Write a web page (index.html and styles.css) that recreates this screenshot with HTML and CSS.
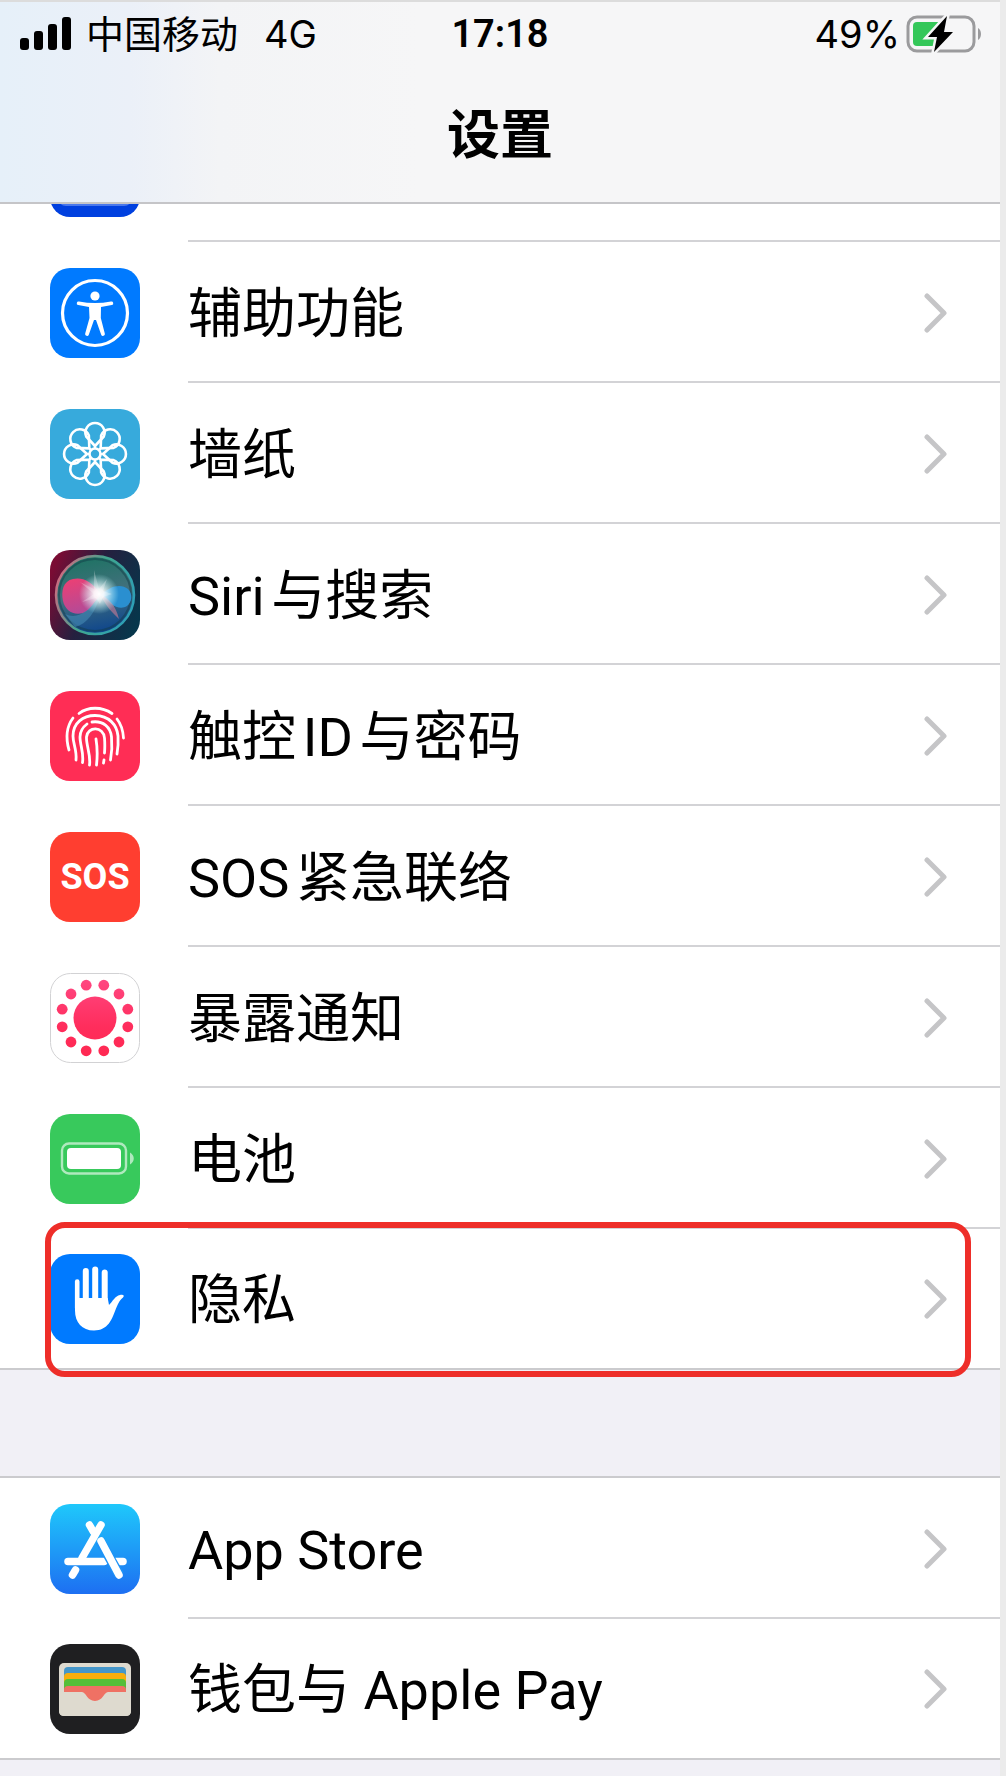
FILE: index.html
```html
<!DOCTYPE html>
<html lang="zh-CN">
  <head>
    <meta charset="UTF-8" />
    <meta name="viewport" content="width=device-width, initial-scale=1.0" />
    <title>设置</title>
    <link rel="stylesheet" href="styles.css">
  </head>
  <body>
    <div class="phone">
      <header class="top-bar">
        <!-- Status bar -->
        <div class="status">
          <div class="status-left">
            <svg class="signal" viewBox="0 0 52 34">
              <rect x="0" y="21" width="9" height="12" rx="3" />
              <rect x="14" y="14" width="9" height="19" rx="3" />
              <rect x="28" y="7" width="9" height="26" rx="3" />
              <rect x="42" y="0" width="9" height="33" rx="3" />
            </svg>
            <span class="carrier">中国移动</span>
            <span>4G</span>
          </div>
          <div class="time">17:18</div>
          <div class="status-right">
            <span>49%</span>
            <svg class="battery" viewBox="0 0 76 38">
              <rect x="2" y="2" width="66" height="34" rx="9" fill="none" stroke="#9b9b9d" stroke-width="3" />
              <path d="M72 13c4 2 4 10 0 12z" fill="#9b9b9d" />
              <path d="M11 7h22v24H11q-4 0-4-4V11q0-4 4-4z" fill="#34c759" />
              <path d="M41 1L22 22h9l-3 15L47 17h-9l3-16z" fill="#000" stroke="#f6f6f7" stroke-width="5" paint-order="stroke" />
            </svg>
          </div>
        </div>
        <h1>设置</h1>
      </header>

      <main>
        <nav class="group group-first">
          <a class="row" href="#display" aria-label="显示与亮度">
            <svg class="icon" viewBox="0 0 90 90">
              <rect width="90" height="90" rx="20" fill="#0040df" />
              <rect x="8" y="10" width="74" height="69" rx="8" fill="#4a78ec" />
            </svg>
            <span class="label"></span>
          </a>
          <a class="row" href="#accessibility">
            <svg class="icon" viewBox="0 0 90 90">
              <rect width="90" height="90" rx="20" fill="#007aff" />
              <circle cx="45" cy="45" r="32.5" fill="none" stroke="#fff" stroke-width="3.2" />
              <circle cx="45" cy="28" r="4.6" fill="#fff" />
              <path d="M29 33.5q16 3 32 0a1.8 1.8 0 0 1 .8 3.6L51 39l-.2 11 4 15.5a1.9 1.9 0 0 1-3.6 1.2L46 52h-2l-5.2 14.7a1.9 1.9 0 0 1-3.6-1.2L39.5 50 39 39l-10.8-1.9a1.8 1.8 0 0 1 .8-3.6z" fill="#fff" />
            </svg>
            <span class="label">辅助功能</span>
            <svg class="chevron" viewBox="0 0 24 40"><path d="M3 3l17 17L3 37" /></svg>
          </a>
          <a class="row" href="#wallpaper">
            <svg class="icon" viewBox="0 0 90 90">
              <defs>
                <path id="petal" d="M0-5V-8L-8.8-17.5A9.6 9.6 0 1 1 8.8-17.5L0-8" />
              </defs>
              <rect width="90" height="90" rx="20" fill="#37aadc" />
              <g transform="translate(45 45)" fill="none" stroke="#fff" stroke-width="2.6" stroke-linejoin="round">
                <use href="#petal" />
                <use href="#petal" transform="rotate(45)" />
                <use href="#petal" transform="rotate(90)" />
                <use href="#petal" transform="rotate(135)" />
                <use href="#petal" transform="rotate(180)" />
                <use href="#petal" transform="rotate(225)" />
                <use href="#petal" transform="rotate(270)" />
                <use href="#petal" transform="rotate(315)" />
                <circle r="5.5" />
              </g>
            </svg>
            <span class="label">墙纸</span>
            <svg class="chevron" viewBox="0 0 24 40"><path d="M3 3l17 17L3 37" /></svg>
          </a>
          <a class="row" href="#siri">
            <svg class="icon" viewBox="0 0 90 90">
              <defs>
                <linearGradient id="siri-bg" x1="0" y1="0.3" x2="1" y2="0.7">
                  <stop offset="0" stop-color="#7a0c34" />
                  <stop offset="0.45" stop-color="#25203f" />
                  <stop offset="1" stop-color="#07364b" />
                </linearGradient>
                <linearGradient id="siri-ball" x1="0.3" y1="0" x2="0.5" y2="1">
                  <stop offset="0" stop-color="#1c7362" />
                  <stop offset="0.5" stop-color="#41707c" />
                  <stop offset="1" stop-color="#0e458d" />
                </linearGradient>
                <linearGradient id="siri-ring" x1="0" y1="0.2" x2="1" y2="0.6">
                  <stop offset="0" stop-color="#d9667f" />
                  <stop offset="0.5" stop-color="#40a68f" />
                  <stop offset="1" stop-color="#2d9fb5" />
                </linearGradient>
                <linearGradient id="siri-pink" x1="0" y1="0" x2="0.3" y2="1">
                  <stop offset="0" stop-color="#ef3f72" />
                  <stop offset="1" stop-color="#b54a96" />
                </linearGradient>
                <radialGradient id="siri-glow">
                  <stop offset="0" stop-color="#fff" />
                  <stop offset="0.25" stop-color="#fff" stop-opacity="0.9" />
                  <stop offset="1" stop-color="#bff" stop-opacity="0" />
                </radialGradient>
              </defs>
              <rect width="90" height="90" rx="20" fill="url(#siri-bg)" />
              <circle cx="45" cy="45" r="39" fill="url(#siri-ball)" stroke="url(#siri-ring)" stroke-width="2.5" />
              <circle cx="45" cy="45" r="36" fill="none" stroke="#123b48" stroke-width="2" opacity="0.5" />
              <path d="M51 45C42 30 31 27 23 29 13 31 11 41 13 51c2 9 10 15 20 12 8-3 11-12 18-18z" fill="url(#siri-pink)" />
              <path d="M51 45c8-9 20-12 27-6 5 5 4 13-1 17-8 5-18-2-26-11z" fill="#2a8fd0" />
              <path d="M51 45c8 4 14 9 18 24-7-7-13-12-18-24z" fill="#b47693" opacity="0.7" />
              <path d="M15 64C27 70 39 62 50 45 46 62 37 74 25 77" fill="#4b93bd" opacity="0.5" />
              <circle cx="49" cy="44" r="20" fill="url(#siri-glow)" />
              <path d="M44 20l5 19 8-10-4 12 9 3-9 3-3 7-4-6-14 4 12-8-14-12 14 7z" fill="#fff" opacity="0.25" />
            </svg>
            <span class="label">Siri与搜索</span>
            <svg class="chevron" viewBox="0 0 24 40"><path d="M3 3l17 17L3 37" /></svg>
          </a>
          <a class="row" href="#touch-id">
            <svg class="icon" viewBox="0 0 90 90">
              <rect width="90" height="90" rx="20" fill="#ff2d55" />
              <g fill="none" stroke="#fff" stroke-width="2.8" stroke-linecap="round">
                <path d="M29 22.5c9-7 23-7 33 0" />
                <path d="M23 27c-6 8-8 18-4 32" />
                <path d="M67 28c4 5 6 11 6.5 19" />
                <path d="M26 69c1-10-3-16-3-24 0-13 10-20.5 22-20.5 14 0 22 9.5 23 20.5.5 7 0 12-1 18" />
                <path d="M32.5 71.5C34 62 30 54 30 46c0-6 3-10 7-13" />
                <path d="M42 31c11-1.5 18.5 5 19.5 15 .7 8 .5 15-1 23" />
                <path d="M39.5 74C41 64 36 54 36.5 46c1-11 17-11 18 1 .4 5 .4 10 0 15" />
                <path d="M46.5 74c1-9 1-17-.5-26" />
                <path d="M54 69l-.5 3" />
              </g>
            </svg>
            <span class="label">触控ID与密码</span>
            <svg class="chevron" viewBox="0 0 24 40"><path d="M3 3l17 17L3 37" /></svg>
          </a>
          <a class="row" href="#sos">
            <span class="icon icon-sos" aria-hidden="true">SOS</span>
            <span class="label">SOS紧急联络</span>
            <svg class="chevron" viewBox="0 0 24 40"><path d="M3 3l17 17L3 37" /></svg>
          </a>
          <a class="row" href="#exposure">
            <svg class="icon" viewBox="0 0 90 90">
              <defs>
                <linearGradient id="exposure-fill" gradientUnits="userSpaceOnUse" x1="0" y1="0" x2="0" y2="90">
                  <stop offset="0" stop-color="#ff4a86" />
                  <stop offset="0.6" stop-color="#ff2d5c" />
                  <stop offset="1" stop-color="#ff2850" />
                </linearGradient>
              </defs>
              <rect x="0.5" y="0.5" width="89" height="89" rx="20" fill="#fff" stroke="#d2d2d4" />
              <g fill="url(#exposure-fill)">
                <circle cx="45" cy="45" r="21.5" />
                <circle cx="53.8" cy="12.2" r="5.4" />
                <circle cx="69" cy="21" r="5.4" />
                <circle cx="77.8" cy="36.2" r="5.4" />
                <circle cx="77.8" cy="53.8" r="5.4" />
                <circle cx="69" cy="69" r="5.4" />
                <circle cx="53.8" cy="77.8" r="5.4" />
                <circle cx="36.2" cy="77.8" r="5.4" />
                <circle cx="21" cy="69" r="5.4" />
                <circle cx="12.2" cy="53.8" r="5.4" />
                <circle cx="12.2" cy="36.2" r="5.4" />
                <circle cx="21" cy="21" r="5.4" />
                <circle cx="36.2" cy="12.2" r="5.4" />
              </g>
            </svg>
            <span class="label">暴露通知</span>
            <svg class="chevron" viewBox="0 0 24 40"><path d="M3 3l17 17L3 37" /></svg>
          </a>
          <a class="row" href="#battery">
            <svg class="icon" viewBox="0 0 90 90">
              <rect width="90" height="90" rx="20" fill="#38c95c" />
              <rect x="12" y="29.5" width="64" height="30" rx="7" fill="none" stroke="#fff" stroke-width="2.4" opacity="0.6" />
              <rect x="17" y="34" width="54" height="21" rx="4" fill="#fff" />
              <path d="M80 38.5c5 3 5 9 0 12z" fill="#fff" opacity="0.6" />
            </svg>
            <span class="label">电池</span>
            <svg class="chevron" viewBox="0 0 24 40"><path d="M3 3l17 17L3 37" /></svg>
          </a>
          <a class="row marked" href="#privacy">
            <svg class="icon" viewBox="0 0 90 90">
              <rect width="90" height="90" rx="20" fill="#007aff" />
              <g stroke="#fff" stroke-linecap="round">
                <path d="M27.2 27.5V54" stroke-width="4.6" />
                <path d="M35.8 17V54" stroke-width="6" />
                <path d="M45.2 15.5V54" stroke-width="6" />
                <path d="M54.7 18.5V54" stroke-width="6" />
              </g>
              <path d="M25 44h32.7l1.3 7c4-4 6-9 11-10 3-.5 5 .5 3 2.5-4 3-5 7-7 11-4 11-8 22-22 22-12 0-19-8-19-20z" fill="#fff" />
            </svg>
            <span class="label">隐私</span>
            <svg class="chevron" viewBox="0 0 24 40"><path d="M3 3l17 17L3 37" /></svg>
          </a>
        </nav>

        <nav class="group">
          <a class="row" href="#app-store">
            <svg class="icon" viewBox="0 0 90 90">
              <defs>
                <linearGradient id="store-bg" x1="0" y1="0" x2="0" y2="1">
                  <stop offset="0" stop-color="#1fc8fb" />
                  <stop offset="1" stop-color="#1d6ff2" />
                </linearGradient>
              </defs>
              <rect width="90" height="90" rx="20" fill="url(#store-bg)" />
              <g fill="none" stroke="#fff" stroke-width="7.5" stroke-linecap="round">
                <path d="M18 57.5h36" />
                <path d="M66 57.5h7" />
                <path d="M51 21L32 54" />
                <path d="M39.5 21l4 7" />
                <path d="M25.5 66l-3 5" />
              </g>
              <path d="M50 37L69.5 71" stroke="#1e93f7" stroke-width="10" />
              <path d="M51 37l18 34" stroke="#fff" stroke-width="7.5" stroke-linecap="round" />
            </svg>
            <span class="label">App Store</span>
            <svg class="chevron" viewBox="0 0 24 40"><path d="M3 3l17 17L3 37" /></svg>
          </a>
          <a class="row" href="#wallet">
            <svg class="icon" viewBox="0 0 90 90">
              <rect width="90" height="90" rx="20" fill="#1f1f21" />
              <rect x="9" y="19" width="72" height="53" rx="5" fill="#dedacf" />
              <path d="M14 49V27q0-4 4-4h54q4 0 4 4v22z" fill="#4596c9" />
              <path d="M14 49V33q0-4 4-4h54q4 0 4 4v16z" fill="#f8ae0b" />
              <path d="M14 49V39q0-4 4-4h54q4 0 4 4v10z" fill="#55bf38" />
              <path d="M14 49v-3q0-4 4-4h54q4 0 4 4v3z" fill="#ef7164" />
              <path d="M9 48h72v19q0 5-5 5H14q-5 0-5-5z" fill="#dedacf" />
              <path d="M32 48c4 0 5 9 13 9s9-9 13-9z" fill="#ef7164" />
            </svg>
            <span class="label">钱包与 Apple Pay</span>
            <svg class="chevron" viewBox="0 0 24 40"><path d="M3 3l17 17L3 37" /></svg>
          </a>
        </nav>
      </main>
    </div>
  </body>
</html>
```
FILE: styles.css
```css
* {
  box-sizing: border-box;
}
body {
  margin: 0;
  background-color: #ebebeb;
  font-family: Inter, "Noto Sans CJK SC", sans-serif;
  color: #000;
}
.phone {
  min-height: 100vh;
  margin-right: 6px;
  background-color: #f1f0f6;
  border-top: 2px solid #dcdcdc;
  overflow: hidden;
}

/* Header */
.top-bar {
  position: relative;
  z-index: 1;
  height: 202px;
  padding: 4px 18px 0;
  background: linear-gradient(to right, #e6f0f9 0, #ebf0f8 130px, #f3f4f6 220px, #f6f6f7 420px);
  border-bottom: 2px solid #c5c5c8;
}
.status {
  display: grid;
  grid-template-columns: 1fr auto 1fr;
  align-items: center;
  height: 56px;
  font-size: 38px;
  line-height: 56px;
}
.status-left,
.status-right {
  display: flex;
  align-items: center;
}
.status-right {
  justify-content: flex-end;
  gap: 6px;
}
.signal {
  width: 52px;
  height: 34px;
  margin-left: 2px;
  margin-right: 14px;
}
.carrier {
  margin-right: 26px;
}
.time {
  font-family: Roboto, sans-serif;
  font-weight: 600;
}
.battery {
  width: 76px;
  height: 38px;
}
h1 {
  margin: 33px 0 0;
  font-size: 53px;
  line-height: 80px;
  font-weight: 600;
  text-align: center;
}

/* Settings list */
.group {
  background-color: #fff;
  border-top: 2px solid #cbcbce;
}
/* scrolled part way under the header */
.group-first {
  margin-top: -105px;
  margin-bottom: 106px;
}
.row {
  position: relative;
  display: flex;
  align-items: center;
  height: 141px;
  padding-left: 50px;
  color: inherit;
  text-decoration: none;
}
.row:last-child {
  border-bottom: 2px solid #cbcbce;
}
.icon {
  flex: none;
  width: 90px;
  height: 90px;
  margin-right: 48px;
}
.icon-sos {
  border-radius: 20px;
  background-color: #ff3e30;
  color: #fff;
  font-family: Roboto, sans-serif;
  font-size: 36px;
  font-weight: 700;
  line-height: 90px;
  text-align: center;
}
.label {
  flex: 1;
  height: 141px;
  border-bottom: 2px solid #d3d3d6;
  font-family: Roboto, "Noto Sans CJK SC", sans-serif;
  font-size: 54px;
  line-height: 145px;
  white-space: nowrap;
  text-autospace: normal;
}
.row:last-child .label {
  border-bottom: none;
}
.chevron {
  position: absolute;
  right: 52px;
  width: 24px;
  height: 40px;
  fill: none;
  stroke: #c5c5c7;
  stroke-width: 5;
  stroke-linecap: round;
  stroke-linejoin: round;
}

/* Red frame round the item to tap */
.marked::after {
  content: "";
  position: absolute;
  top: -7px;
  right: 29px;
  bottom: -9px;
  left: 45px;
  border: 6px solid #ee2e29;
  border-radius: 20px;
}
```
